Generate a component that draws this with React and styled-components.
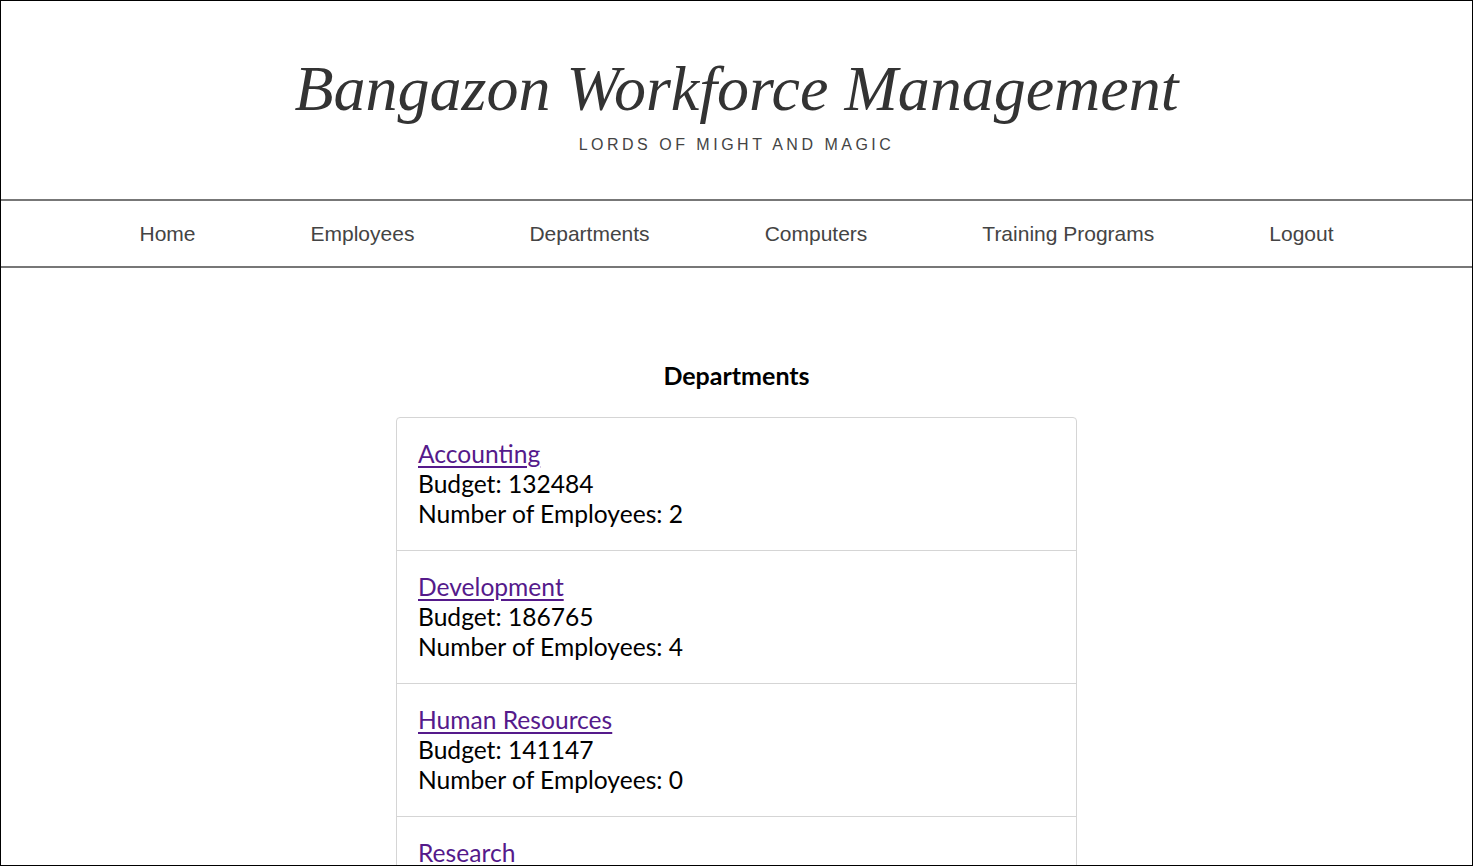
import React from "react";
import styled, { createGlobalStyle } from "styled-components";

const Global = createGlobalStyle`
  html, body { margin: 0; padding: 0; background: #fff; }
  * { box-sizing: border-box; }
`;

const Frame = styled.div`
  height: 100vh;
  border: 1px solid #000;
  overflow: hidden;
  font-family: "Lato", "Liberation Sans", sans-serif;
`;

const Header = styled.header`
  display: flex;
  flex-direction: column;
  align-items: center;
  padding-top: 52px;
  height: 198px;
`;

const Title = styled.h1`
  margin: 0;
  font-family: "Liberation Serif", serif;
  font-style: italic;
  font-weight: 400;
  font-size: 64px;
  line-height: 72px;
  color: #333;
  letter-spacing: 0;
`;

const Subtitle = styled.div`
  margin-top: 10px;
  font-family: "Liberation Sans", Arial, sans-serif;
  font-size: 16px;
  line-height: 20px;
  letter-spacing: 3.5px;
  color: #444;
`;

const Nav = styled.nav`
  display: flex;
  justify-content: center;
  align-items: center;
  gap: 115px;
  height: 69px;
  border-top: 2px solid #777;
  border-bottom: 2px solid #777;
`;

const NavItem = styled.a`
  font-family: "Liberation Sans", Arial, sans-serif;
  font-size: 21px;
  color: #444;
  text-decoration: none;
`;

const Main = styled.main`
  display: flex;
  flex-direction: column;
  align-items: center;
  padding-top: 92px;
`;

const Heading = styled.h2`
  margin: 0 0 27px;
  font-family: "Lato", sans-serif;
  font-weight: 700;
  font-size: 25px;
  line-height: 30px;
  color: #000;
`;

const List = styled.ul`
  list-style: none;
  margin: 0;
  padding: 0;
  width: 681px;
  border: 1px solid #d5d5d5;
  border-radius: 4px;
`;

const Item = styled.li`
  padding: 21px;
  font-size: 24.6px;
  line-height: 30px;
  color: #000;
  & + & { border-top: 1px solid #d5d5d5; }
`;

const DeptLink = styled.a`
  color: #551a8b;
  text-decoration: underline;
  text-underline-offset: 3px;
`;

const Line = styled.div``;

const depts = [
  { name: "Accounting", budget: 132484, count: 2 },
  { name: "Development", budget: 186765, count: 4 },
  { name: "Human Resources", budget: 141147, count: 0 },
  { name: "Research", budget: 154321, count: 3 },
];

export default function App() {
  return (
    <>
      <Global />
      <Frame>
        <Header>
          <Title>Bangazon Workforce Management</Title>
          <Subtitle>LORDS OF MIGHT AND MAGIC</Subtitle>
        </Header>
        <Nav>
          {["Home", "Employees", "Departments", "Computers", "Training Programs", "Logout"].map((n) => (
            <NavItem key={n} href="#">{n}</NavItem>
          ))}
        </Nav>
        <Main>
          <Heading>Departments</Heading>
          <List>
            {depts.map((d) => (
              <Item key={d.name}>
                <DeptLink href="#">{d.name}</DeptLink>
                <Line>Budget: {d.budget}</Line>
                <Line>Number of Employees: {d.count}</Line>
              </Item>
            ))}
          </List>
        </Main>
      </Frame>
    </>
  );
}
